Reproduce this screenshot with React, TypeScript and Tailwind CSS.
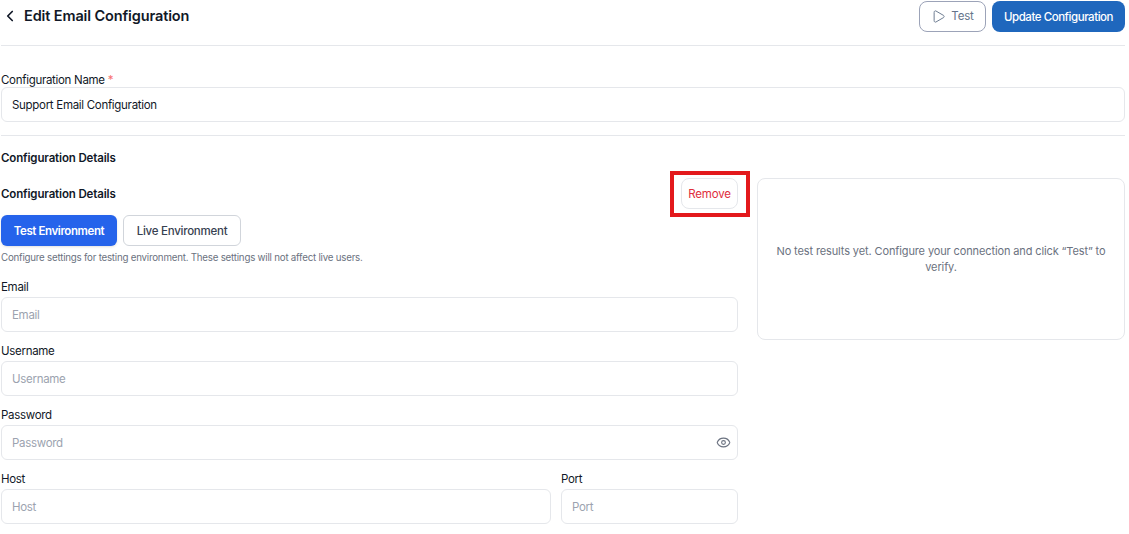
import { ChevronLeft, Eye, Play } from 'lucide-react'

const font = { fontFamily: 'Inter, "Noto Sans", sans-serif' }

function Field({
  label,
  placeholder,
  className,
  children,
}: {
  label: string
  placeholder: string
  className?: string
  children?: React.ReactNode
}) {
  return (
    <div className={className}>
      <div className="h-[18px] pt-[1px] text-[11.5px] leading-[18px] tracking-[-0.3px] text-[#111827]">{label}</div>
      <div className="mt-[2px] flex h-[35px] items-center justify-between rounded-[6px] border border-[#e5e7eb] bg-white pl-[10px] pr-[5px]">
        <span className="block pt-[2px] text-[11.5px] tracking-[-0.3px] text-[#9ca3af]">{placeholder}</span>
        {children}
      </div>
    </div>
  )
}

export default function App() {
  return (
    <div style={font} className="h-[534px] w-[1129px] overflow-hidden bg-white pl-[1px] pr-[4px]">
      <header className="flex h-[46px] items-start justify-between border-b border-[#e5e7eb] pt-[1px]">
        <div className="flex h-[30px] items-center">
          <ChevronLeft className="h-[18px] w-[18px] text-[#111827]" strokeWidth={2.25} />
          <h1 className="ml-[5px] text-[14.5px] font-semibold tracking-[-0.12px] text-[#111827]">
            Edit Email Configuration
          </h1>
        </div>
        <div className="flex gap-[6px]">
          <button
            type="button"
            className="flex h-[31px] w-[67px] items-center justify-center gap-[5px] rounded-[8px] border border-[#9ca3b8] bg-white text-[11.5px] tracking-[-0.2px] text-[#64748b]"
          >
            <Play className="h-[15px] w-[15px]" strokeWidth={1.5} />
            Test
          </button>
          <button
            type="button"
            className="h-[31px] w-[133px] rounded-[8px] bg-[#1f67bd] pt-[2px] text-[11.5px] font-medium tracking-[-0.45px] text-white"
          >
            Update Configuration
          </button>
        </div>
      </header>

      <div className="mt-[24px] h-[18px] pt-[1px] text-[11.5px] leading-[18px] tracking-[-0.3px] text-[#111827]">
        Configuration Name <span className="text-[#f87171]">*</span>
      </div>
      <div className="mt-[-1px] flex h-[35px] items-center rounded-[6px] border border-[#e5e7eb] pl-[10px] pt-[2px] text-[11.5px] tracking-[-0.3px] text-[#111827]">
        Support Email Configuration
      </div>
      <div className="mt-[13px] border-t border-[#e5e7eb]" />

      <h2 className="mt-[14px] h-[15px] pt-[1px] text-[11.5px] font-semibold leading-[15px] tracking-[-0.14px] text-[#111827]">
        Configuration Details
      </h2>

      <div className="mt-[13px] flex gap-[19px]">
        <div className="w-[737px]">
          <div className="flex h-[31px] items-center justify-between">
            <h2 className="pt-[2px] text-[11.5px] font-semibold tracking-[-0.14px] text-[#111827]">
              Configuration Details
            </h2>
            <button
              type="button"
              className="relative h-[31px] w-[57px] rounded-[8px] border border-[#e5e7eb] bg-white pt-[2px] text-[11.5px] tracking-[-0.15px] text-[#e02d3c]"
            >
              Remove
              <span className="absolute left-[-12px] top-[-8px] h-[46px] w-[80px] border-[4px] border-[#e3191c]" />
            </button>
          </div>

          <div className="mt-[6px] flex gap-[6px]">
            <button
              type="button"
              className="h-[31px] w-[116px] rounded-[6px] bg-[#2563eb] pt-[2px] text-[11.5px] font-semibold tracking-[-0.4px] text-white shadow-sm"
            >
              Test Environment
            </button>
            <button
              type="button"
              className="h-[31px] w-[118px] rounded-[6px] border border-[#d1d5db] bg-white pt-[2px] text-[11.5px] font-medium tracking-[-0.25px] text-[#374151]"
            >
              Live Environment
            </button>
          </div>
          <p className="mt-[4px] h-[14px] pt-[1px] text-[9.75px] leading-[14px] tracking-[-0.23px] text-[#6b7280]">
            Configure settings for testing environment. These settings will not affect live users.
          </p>

          <div className="mt-[13px] flex flex-col gap-[9px]">
            <Field label="Email" placeholder="Email" />
            <Field label="Username" placeholder="Username" />
            <Field label="Password" placeholder="Password">
              <Eye className="mr-[1px] h-[15px] w-[15px] text-[#6b7280]" strokeWidth={1.75} />
            </Field>
            <div className="flex gap-[10px]">
              <Field label="Host" placeholder="Host" className="w-[550px]" />
              <Field label="Port" placeholder="Port" className="flex-1" />
            </div>
          </div>
        </div>

        <aside className="flex h-[162px] w-[368px] items-center justify-center rounded-[8px] border border-[#e5e7eb] px-[12px] text-center text-[11px] leading-[16px] tracking-[-0.12px] text-[#6b7280]">
          No test results yet. Configure your connection and click “Test” to verify.
        </aside>
      </div>
    </div>
  )
}
